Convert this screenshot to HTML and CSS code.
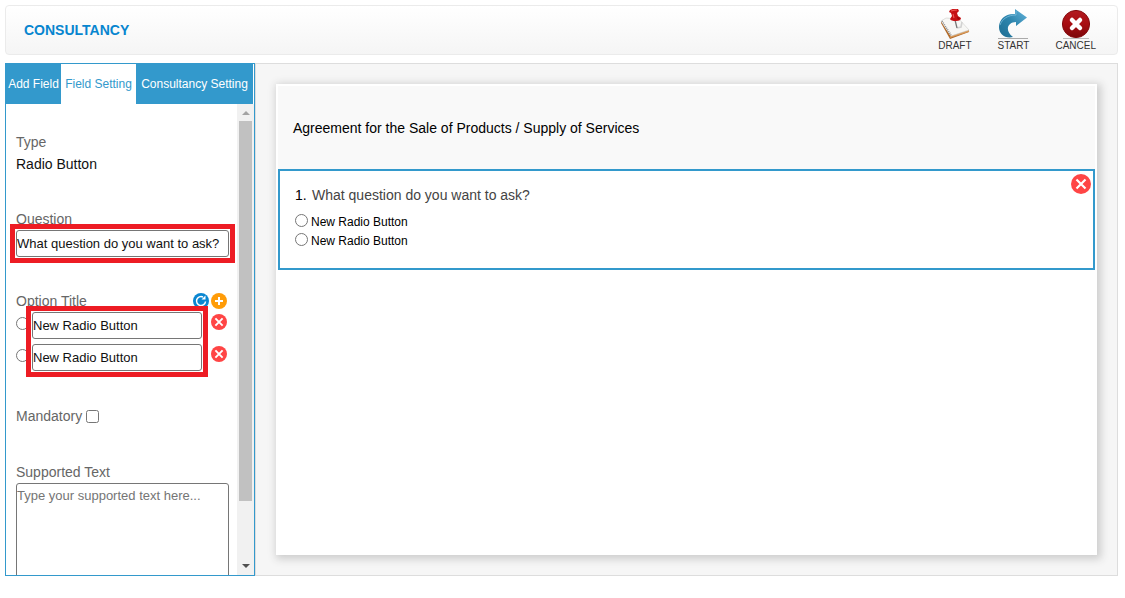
FILE: index.html
```html
<!DOCTYPE html>
<html lang="en">
<head>
<meta charset="UTF-8" />
<meta name="viewport" content="width=device-width, initial-scale=1" />
<title>Consultancy</title>
<link rel="stylesheet" href="styles.css">
</head>
<body>

<header class="topbar">
  <h1>CONSULTANCY</h1>
  <div class="actions">
    <button type="button" class="action">
      <svg width="30" height="30" viewBox="0 0 30 30">
        <path d="M1 12l9 14 19-5v2L10 30 1 14z" fill="#b06a2a"/>
        <path d="M10 28l19-6" stroke="#d99a58" stroke-width="1.500"/>
        <path d="M1 12L6 9l13 1 10 11-18 6z" fill="#f7f7f5" stroke="#cfcfcb" stroke-width=".6"/>
        <path d="M2 12l9 14" stroke="#8c8c8c" stroke-width="1.500" stroke-dasharray="1 1"/>
        <path d="M17 19l4-1 1-5" fill="none" stroke="#d2d2d2" stroke-width="1.600"/>
        <path d="M15 11l2 8" stroke="#777" stroke-width="1.300"/>
        <path d="M10 1q4-2 8-1l1 2-2 2 1 3 3 2q0 3-5 3-5 0-6-2l2-3-1-3-2-1z" fill="#c50f13"/>
        <path d="M11 2q3-1 6-1M13 5l1 4" stroke="#ee5853" stroke-width="1.100" fill="none"/>
        <path d="M16 5l1 3 3 1-2 2z" fill="#940609"/>
      </svg>
      <span>DRAFT</span>
    </button>
    <button type="button" class="action">
      <svg width="30" height="30" viewBox="0 0 30 30">
        <defs>
          <linearGradient id="blue" x1="0" y1="1" x2="1" y2="0">
            <stop offset="0" stop-color="#1d6d92"/>
            <stop offset=".5" stop-color="#2d85ad"/>
            <stop offset="1" stop-color="#65b4dc"/>
          </linearGradient>
        </defs>
        <path d="M0 29.500h30" stroke="#aaa"/>
        <path d="M17 0L29 8.500 18 17v-4C10 13 6 21 15 28 7 30 1 25 1 18 1 10 8 4 17 5z" fill="url(#blue)"/>
        <path d="M18 2v4C10 6 4 10 2 16" fill="none" stroke="#79bddd" stroke-width=".8"/>
      </svg>
      <span>START</span>
    </button>
    <button type="button" class="action">
      <svg width="30" height="30" viewBox="0 0 30 30">
        <defs>
          <linearGradient id="red" x1="0" y1="0" x2="0" y2="1">
            <stop offset="0" stop-color="#b21b20"/>
            <stop offset=".5" stop-color="#a80d12"/>
            <stop offset="1" stop-color="#7c070a"/>
          </linearGradient>
        </defs>
        <path d="M2 29.500h26" stroke="#bbb"/>
        <circle cx="15" cy="15" r="13.6" fill="url(#red)" stroke="#850b0f" stroke-width="1"/>
        <path d="M11 11l8 8M19 11l-8 8" stroke="#fff" stroke-width="4.500" stroke-linecap="round"/>
      </svg>
      <span>CANCEL</span>
    </button>
  </div>
</header>

<main class="workspace">
  <aside class="sidebar">
    <nav class="tabs">
      <a href="#add" class="tab">Add Field</a>
      <a href="#field" class="tab active">Field Setting</a>
      <a href="#consultancy" class="tab wide">Consultancy Setting</a>
    </nav>

    <div class="pane">
      <form class="settings">
        <div class="field">
          <div class="field-label">Type</div>
          <div class="field-value">Radio Button</div>
        </div>

        <div class="field">
          <label class="field-label" for="question">Question</label>
          <div class="marked">
            <input type="text" id="question" class="text-input" value="What question do you want to ask?">
          </div>
        </div>

        <div class="field">
          <div class="option-head">
            <span class="field-label">Option Title</span>
            <button type="button" class="icon-btn" aria-label="Reset options">
              <svg width="16" height="16" viewBox="0 0 16 16">
                <circle cx="8" cy="8" r="8" fill="#0a86d1"/>
                <path d="M10 4A4.500 4.500 0 1 0 12.500 8.500" fill="none" stroke="#fff" stroke-width="1.500"/>
                <path d="M8.500 6.500h4v-4z" fill="#fff"/>
              </svg>
            </button>
            <button type="button" class="icon-btn" aria-label="Add option">
              <svg width="16" height="16" viewBox="0 0 16 16">
                <circle cx="8" cy="8" r="8" fill="#ff9c08"/>
                <path d="M8 4v8M4 8h8" stroke="#fff" stroke-width="2"/>
              </svg>
            </button>
          </div>
          <div class="options">
            <div class="option">
              <input type="radio" name="default" aria-label="Default option 1">
              <input type="text" class="text-input" aria-label="Option 1" value="New Radio Button">
              <button type="button" class="icon-btn" aria-label="Remove option 1">
                <svg width="16" height="16" viewBox="0 0 20 20">
                  <circle cx="10" cy="10" r="10" fill="#ff4545"/>
                  <path d="M5.500 5.500l9 9M14.500 5.500l-9 9" stroke="#fff" stroke-width="2.400"/>
                </svg>
              </button>
            </div>
            <div class="option">
              <input type="radio" name="default" aria-label="Default option 2">
              <input type="text" class="text-input" aria-label="Option 2" value="New Radio Button">
              <button type="button" class="icon-btn" aria-label="Remove option 2">
                <svg width="16" height="16" viewBox="0 0 20 20">
                  <circle cx="10" cy="10" r="10" fill="#ff4545"/>
                  <path d="M5.500 5.500l9 9M14.500 5.500l-9 9" stroke="#fff" stroke-width="2.400"/>
                </svg>
              </button>
            </div>
          </div>
        </div>

        <div class="field check-row">
          <label class="field-label" for="mandatory">Mandatory</label>
          <input type="checkbox" id="mandatory">
        </div>

        <div class="field">
          <label class="field-label" for="support">Supported Text</label>
          <textarea id="support" class="text-input area" placeholder="Type your supported text here..."></textarea>
        </div>
      </form>

      <div class="scrollbar">
        <svg width="17" height="17" viewBox="0 0 17 17"><path d="M5 11l4-4 4 4z" fill="#a3a3a3"/></svg>
        <div class="track"><div class="thumb"></div></div>
        <svg width="17" height="17" viewBox="0 0 17 17"><path d="M5 6h8l-4 4z" fill="#505050"/></svg>
      </div>
    </div>
  </aside>

  <section class="preview">
    <div class="paper">
      <div class="paper-head">Agreement for the Sale of Products / Supply of Services</div>
      <div class="question">
        <div class="question-title"><span class="num">1.</span>What question do you want to ask?</div>
        <label class="answer"><input type="radio" name="answer">New Radio Button</label>
        <label class="answer"><input type="radio" name="answer">New Radio Button</label>
        <button type="button" class="icon-btn remove" aria-label="Remove question">
          <svg width="20" height="20" viewBox="0 0 20 20">
            <circle cx="10" cy="10" r="10" fill="#ff4545"/>
            <path d="M5.500 5.500l9 9M14.500 5.500l-9 9" stroke="#fff" stroke-width="2.200"/>
          </svg>
        </button>
      </div>
    </div>
  </section>
</main>

</body>
</html>
```
FILE: styles.css
```css
* {
  box-sizing: border-box;
}
body {
  display: flex;
  flex-direction: column;
  gap: 8px;
  height: 100vh;
  margin: 0;
  padding: 5px 7px 22px 5px;
  background: #fff;
  color: #111;
  font-family: 'Liberation Sans', Arial, sans-serif;
  font-size: 14px;
}
button {
  padding: 0;
  border: 0;
  background: none;
  font-family: inherit;
  cursor: pointer;
}
svg {
  display: block;
}
input[type="radio"],
input[type="checkbox"] {
  flex: none;
  width: 13px;
  height: 13px;
  margin: 0;
}

/* top bar */
.topbar {
  display: flex;
  flex: none;
  align-items: center;
  justify-content: space-between;
  height: 50px;
  padding: 0 21px 0 18px;
  border: 1px solid #ebebeb;
  border-radius: 4px;
  background: linear-gradient(#fff, #f5f5f5);
}
.topbar h1 {
  margin: 0;
  color: #0785cf;
  font-size: 14px;
}
.actions {
  display: flex;
  gap: 26px;
}
.action {
  display: flex;
  flex-direction: column;
  align-items: center;
  color: #333;
  font-size: 10px;
  line-height: 13px;
}

.workspace {
  display: flex;
  flex: 1;
  min-height: 0;
}

/* sidebar */
.sidebar {
  display: flex;
  flex: none;
  flex-direction: column;
  width: 250px;
  border: 1px solid #39c;
}
.tabs {
  display: flex;
  flex: none;
  height: 40px;
  padding-right: 1px;
}
.tab {
  display: flex;
  flex: 0 0 55px;
  align-items: center;
  justify-content: center;
  background: #39c;
  color: #fff;
  font-size: 12px;
  text-decoration: none;
  white-space: nowrap;
}
.tab.active {
  flex-basis: 75px;
  background: #fff;
  color: #39c;
}
.tab.wide {
  flex: 1;
}
.pane {
  display: flex;
  flex: 1;
  min-height: 0;
}
.settings {
  display: flex;
  flex: 1;
  flex-direction: column;
  gap: 33px;
  min-width: 0;
  padding: 27px 8px 0 10px;
  overflow: hidden;
}
.field {
  flex: none;
}
.field-label {
  display: block;
  color: #666;
  line-height: 22px;
}
.field-value {
  line-height: 22px;
}
.text-input {
  display: block;
  width: 100%;
  min-width: 0;
  height: 27px;
  padding: 0;
  border: 1px solid #767676;
  border-radius: 3px;
  background: #fff;
  color: #111;
  font-family: inherit;
  font-size: 13px;
}
.text-input.area {
  height: 120px;
  padding-top: 4px;
  resize: none;
}

/* red frames round the editable texts */
.marked,
.options {
  position: relative;
}
.marked::after,
.options::after {
  content: '';
  position: absolute;
  inset: -6px;
  border: 5px solid #ed1c24;
  pointer-events: none;
}
.options::after {
  left: 10px;
  right: 21px;
}
.option-head {
  display: flex;
  align-items: center;
  gap: 2px;
  padding-right: 2px;
}
.option-head .field-label {
  flex: 1;
}
.options {
  display: flex;
  flex-direction: column;
  gap: 5px;
}
.option {
  display: flex;
  align-items: center;
  gap: 3px;
  padding-right: 2px;
}
.option input[type="radio"] {
  margin-bottom: 4px;
}
.option .text-input {
  flex: 1;
}
.option .icon-btn {
  margin: 0 0 8px 6px;
}
.check-row {
  display: flex;
  align-items: center;
  gap: 4px;
  height: 24px;
}

.scrollbar {
  display: flex;
  flex: none;
  flex-direction: column;
  width: 17px;
  background: #f1f1f1;
}
.track {
  flex: 1;
  padding: 0 2px;
}
.thumb {
  height: 87%;
  background: #c1c1c1;
}

/* preview */
.preview {
  display: flex;
  flex: 1;
  min-width: 0;
  padding: 20px;
  border: 1px solid #ddd;
  background: #f6f6f6;
}
.paper {
  flex: 1;
  padding: 2px;
  background: #fff;
  box-shadow: 2px 2px 8px 2px #ccc;
}
.paper-head {
  display: flex;
  align-items: center;
  height: 83px;
  padding: 0 15px;
  background: #f9f9f9;
  color: #000;
}
.question {
  position: relative;
  padding: 14px 15px 17px;
  border: 2px solid #39c;
}
.question-title {
  display: flex;
  padding-bottom: 8px;
  color: #444;
  line-height: 20px;
}
.num {
  width: 17px;
  color: #000;
}
.answer {
  display: flex;
  align-items: center;
  gap: 3px;
  color: #000;
  font-size: 12px;
  line-height: 19px;
}
.answer input[type="radio"] {
  margin-bottom: 5px;
}
.remove {
  position: absolute;
  top: 3px;
  right: 2px;
}
```
